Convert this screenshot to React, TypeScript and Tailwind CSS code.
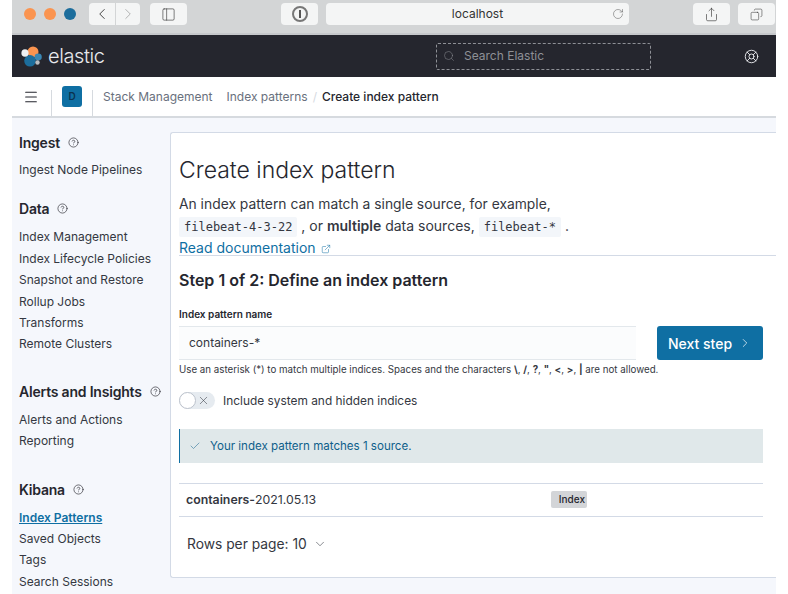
import { ChevronDown, ChevronLeft, ChevronRight, Check, ExternalLink, CircleHelp, LifeBuoy, Menu, RotateCw, Search, Share, Copy, X, PanelLeft } from "lucide-react";

const font = "font-['Inter',sans-serif]";

function ChromeBtn({ children, className }: { children: React.ReactNode; className: string }) {
  return <div className={`h-[22px] bg-[#f4f5f5] rounded-[4px] flex items-center justify-center ${className}`}>{children}</div>;
}

function BrowserBar() {
  return (
    <div className="h-[35px] bg-[#d3d5d6] border-b-2 border-[#c6c8cb] flex items-center pb-[5px]">
      <div className="w-[12px] h-[12px] ml-[12px] rounded-full bg-[#fa9450]" />
      <div className="w-[12px] h-[12px] ml-[8px] rounded-full bg-[#fa9450]" />
      <div className="w-[12px] h-[12px] ml-[8px] rounded-full bg-[#1c6d9c]" />
      <ChromeBtn className="w-[26px] ml-[13px] rounded-r-none"><ChevronLeft size={18} strokeWidth={1.2} className="text-[#333]" /></ChromeBtn>
      <ChromeBtn className="w-[25px] rounded-l-none border-l border-[#d3d5d6]"><ChevronRight size={18} strokeWidth={1.2} className="text-[#aaa]" /></ChromeBtn>
      <ChromeBtn className="w-[37px] ml-[10px]"><PanelLeft size={15} strokeWidth={1} className="text-[#333]" /></ChromeBtn>
      <ChromeBtn className="w-[37px] ml-[94px]">
        <div className="w-[16px] h-[16px] rounded-full border-2 border-[#777] flex items-center justify-center">
          <div className="w-[2px] h-[8px] bg-[#555]" />
        </div>
      </ChromeBtn>
      <div className="w-[303px] h-[22px] ml-[8px] bg-[#f4f5f5] rounded-[4px] flex items-center relative">
        <span className="w-full text-center text-[12px] text-[#333]">localhost</span>
        <RotateCw size={12} strokeWidth={1} className="absolute right-[5px] text-[#555]" />
      </div>
      <ChromeBtn className="w-[37px] ml-[64px]"><Share size={15} strokeWidth={1} className="text-[#333]" /></ChromeBtn>
      <ChromeBtn className="w-[37px] ml-[8px]"><Copy size={13} strokeWidth={1} className="text-[#333] -scale-x-100" /></ChromeBtn>
    </div>
  );
}

function ElasticLogo() {
  return (
    <svg width="21" height="21" viewBox="0 0 21 21">
      <circle cx="12" cy="6" r="5.5" fill="#fa9450" />
      <circle cx="9" cy="14.8" r="5.8" fill="#1c6d9c" />
      <ellipse cx="4" cy="7" rx="3.6" ry="3.8" fill="#eef0f2" />
      <ellipse cx="17.2" cy="11" rx="3.6" ry="3.4" fill="#3a87b4" />
      <circle cx="16.5" cy="16.5" r="2.2" fill="#b9bcc0" />
    </svg>
  );
}

function TopBar() {
  return (
    <div className="h-[42px] bg-[#25262e] flex items-center">
      <div className="ml-[9px]"><ElasticLogo /></div>
      <span className="ml-[6px] w-[55px] text-[#e8e9ec] text-[20px] font-light tracking-[-0.4px] leading-none">elastic</span>
      <div className="ml-[333px] w-[215px] h-[27px] border border-dashed border-[#8e9096] rounded-[2px] flex items-center">
        <Search size={12} strokeWidth={1} className="ml-[6px] text-[#8e9096]" />
        <span className="ml-[9px] text-[12px] text-[#8e9096]">Search Elastic</span>
      </div>
      <LifeBuoy size={15} strokeWidth={1.5} className="ml-[93px] text-[#e8e9ec]" />
    </div>
  );
}

function Breadcrumbs() {
  return (
    <div className="h-[41px] bg-white border-b-2 border-[#d6dadf] flex items-stretch text-[12px]">
      <div className="w-[40px] border-r border-[#d6dadf] flex items-center justify-center mt-[13px] mb-0">
        <Menu size={16} strokeWidth={1.6} className="text-[#25262e] -mt-[13px] -ml-[2px]" />
      </div>
      <div className="w-[41px] border-r border-[#d6dadf] flex items-center justify-center mt-[13px]">
        <div className="w-[20px] h-[21px] -mt-[13px] rounded-[3px] bg-[#0f6fa3] text-[#0a3350] text-[10px] font-semibold flex items-center justify-center">D</div>
      </div>
      <div className="flex items-center">
        <span className="ml-[10px] text-[#69707d]">Stack Management</span>
        <span className="ml-[14px] text-[#69707d]">Index patterns</span>
        <span className="mx-[5px] text-[#d6dadf]">/</span>
        <span className="text-[#25262e] font-medium">Create index pattern</span>
      </div>
    </div>
  );
}

function SideGroup({ title, items, className, listClassName = "mt-[7px]" }: { title: string; items: string[]; className?: string; listClassName?: string }) {
  return (
    <div className={className}>
      <div className="h-[20px] flex items-center gap-[8px]">
        <span className="text-[14px] font-semibold tracking-[-0.2px] text-[#25262e]">{title}</span>
        <CircleHelp size={11} strokeWidth={1.4} className="text-[#25262e]" />
      </div>
      <div className={listClassName}>
        {items.map((item) => (
          <div
            key={item}
            className={`h-[21.4px] leading-[21.4px] text-[12px] whitespace-nowrap ${item === "Index Patterns" ? "font-semibold underline text-[#0f6fa3]" : "text-[#343741]"}`}
          >
            {item}
          </div>
        ))}
      </div>
    </div>
  );
}

function Sidebar() {
  return (
    <div className="w-[158px] shrink-0 pl-[7px] pt-[14px]">
      <SideGroup title="Ingest" items={["Ingest Node Pipelines"]} />
      <SideGroup className="mt-[18px]" listClassName="mt-[8px]" title="Data" items={["Index Management", "Index Lifecycle Policies", "Snapshot and Restore", "Rollup Jobs", "Transforms", "Remote Clusters"]} />
      <SideGroup className="mt-[27px]" title="Alerts and Insights" items={["Alerts and Actions", "Reporting"]} />
      <SideGroup className="mt-[28px]" title="Kibana" items={["Index Patterns", "Saved Objects", "Tags", "Search Sessions"]} />
    </div>
  );
}

function Code({ children }: { children: React.ReactNode }) {
  return <code className="inline-block h-[20px] leading-[20px] px-[5px] bg-[#f3f6fa] rounded-[2px] font-['DejaVu_Sans_Mono',monospace] text-[12px] text-[#343741]">{children}</code>;
}

function Panel() {
  return (
    <div className="flex-1 h-[446px] mt-[14px] bg-white border border-r-0 border-[#d3dae6] rounded-l-[3px] pl-[8px]">
      <h1 className="mt-[20px] text-[23px] leading-[34px] font-light text-[#25262e]">Create index pattern</h1>
      <p className="mt-[7px] text-[13.85px] leading-[21px] text-[#343741]">An index pattern can match a single source, for example,</p>
      <p className="text-[14px] leading-[22px] text-[#343741] whitespace-nowrap">
        <Code>filebeat-4-3-22</Code> , or <b className="font-semibold">multiple</b> data sources, <Code>filebeat-*</Code> .
      </p>
      <div className="h-[19px] leading-[22px] flex items-start gap-[5px] border-b border-[#d3dae6] text-[14px] text-[#0f6fa3]">
        Read documentation <ExternalLink size={10} strokeWidth={1.2} className="mt-[7px]" />
      </div>
      <h2 className="mt-[12px] text-[16px] leading-[24px] font-semibold text-[#25262e]">Step 1 of 2: Define an index pattern</h2>
      <div className="mt-[15px] text-[10px] leading-[14px] font-semibold text-[#25262e]">Index pattern name</div>
      <div className="mt-[5px] flex items-start pr-[13px]">
        <div className="w-[457px] h-[34px] bg-[#fbfcfd] border-y border-[#e3e8ec] pl-[10px] flex items-center text-[12px] text-[#343741]">containers-*</div>
        <button className="ml-[21px] w-[106px] h-[34px] rounded-[3px] bg-[#0f6fa3] text-white text-[14px] font-medium flex items-center justify-center gap-[6px]">
          Next step <ChevronRight size={14} strokeWidth={1.2} />
        </button>
      </div>
      <div className="mt-[3px] text-[9.75px] leading-[14px] text-[#343741] whitespace-nowrap">
        Use an asterisk (*) to match multiple indices. Spaces and the characters <b>\</b>, <b>/</b>, <b>?</b>, <b>"</b>, <b>&lt;</b>, <b>&gt;</b>, <b>|</b> are not allowed.
      </div>
      <div className="mt-[15px] flex items-center">
        <div className="w-[36px] h-[17px] rounded-full bg-[#e6ebf0] relative flex items-center justify-end pr-[5px]">
          <div className="absolute left-0 top-0 w-[17px] h-[17px] rounded-full bg-white border border-[#bcc2cc]" />
          <X size={13} strokeWidth={1} className="text-[#343741]" />
        </div>
        <span className="ml-[8px] text-[11.9px] text-[#343741]">Include system and hidden indices</span>
      </div>
      <div className="mt-[19px] mr-[13px] h-[34px] pt-[1px] bg-[#e0e8ea] border-l border-[#0f6fa3] flex items-center text-[11.55px] text-[#0f5f8a]">
        <Check size={12} strokeWidth={1} className="ml-[9px]" />
        <span className="ml-[9px]">Your index pattern matches 1 source.</span>
      </div>
      <div className="mt-[20px] mr-[13px] h-[34px] border-y border-[#d3dae6] flex items-center text-[12.3px] text-[#343741]">
        <span className="ml-[7px] w-[365px]"><b className="font-semibold">containers-</b>2021.05.13</span>
        <span className="h-[17px] w-[36px] bg-[#d3d5d8] rounded-[2px] text-[10px] font-medium flex items-center justify-end pr-[2px] text-[#25262e]">Index</span>
      </div>
      <div className="mt-[17px] ml-[8px] flex items-center gap-[6px] text-[13.8px] text-[#343741]">
        Rows per page: 10 <ChevronDown size={14} strokeWidth={1} />
      </div>
    </div>
  );
}

export default function App() {
  return (
    <div className={`w-[788px] h-[594px] overflow-hidden bg-white ${font}`}>
      <div className="ml-[12px] w-[764px] h-[594px] bg-[#f5f7fc] flex flex-col">
        <BrowserBar />
        <TopBar />
        <Breadcrumbs />
        <div className="flex">
          <Sidebar />
          <Panel />
        </div>
      </div>
    </div>
  );
}
